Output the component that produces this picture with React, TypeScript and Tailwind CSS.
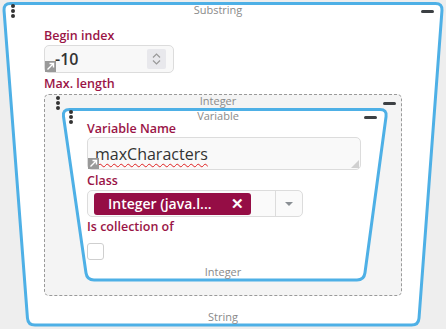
import React from "react";

type Pt = [number, number];

// rounded polygon path so the funnel corners look like the reference
function roundedPath(points: Pt[], r: number) {
    const n = points.length;
    let d = "";
    for (let i = 0; i < n; i++) {
        const prev = points[(i - 1 + n) % n];
        const cur = points[i];
        const next = points[(i + 1) % n];
        const v1 = [prev[0] - cur[0], prev[1] - cur[1]];
        const v2 = [next[0] - cur[0], next[1] - cur[1]];
        const l1 = Math.hypot(v1[0], v1[1]);
        const l2 = Math.hypot(v2[0], v2[1]);
        const a = [cur[0] + (v1[0] / l1) * r, cur[1] + (v1[1] / l1) * r];
        const b = [cur[0] + (v2[0] / l2) * r, cur[1] + (v2[1] / l2) * r];
        d += `${i === 0 ? "M" : "L"}${a[0]},${a[1]} Q${cur[0]},${cur[1]} ${b[0]},${b[1]} `;
    }
    return d + "Z";
}

const Funnel = ({ points, className }: { points: Pt[]; className: string }) => (
    <svg className={className} width="100%" height="100%">
        <path d={roundedPath(points, 7)} fill="#ffffff" stroke="#4eb0e6" strokeWidth={3} />
    </svg>
);

const Dots = ({ className }: { className: string }) => (
    <div className={`flex flex-col gap-[1.5px] ${className}`}>
        <span className="w-[3.5px] h-[3.5px] rounded-full bg-[#333]" />
        <span className="w-[3.5px] h-[3.5px] rounded-full bg-[#333]" />
        <span className="w-[3.5px] h-[3.5px] rounded-full bg-[#333]" />
    </div>
);

const Minus = ({ className }: { className: string }) => (
    <div className={`w-[13px] h-[2.5px] rounded-sm bg-[#3c4043] ${className}`} />
);

const ResizeCorner = () => (
    <div className="absolute left-0 bottom-0 w-[11px] h-[11px] bg-[#999] flex items-center justify-center">
        <svg width="9" height="9" viewBox="0 0 9 9">
            <path d="M1.5 7.5 L7.5 1.5 M3.5 1.5 H7.5 V5.5" stroke="#fff" strokeWidth="1.4" fill="none" />
        </svg>
    </div>
);

const Label = ({ children, className = "" }: { children: React.ReactNode; className?: string }) => (
    <div className={`text-[12.5px] leading-[14px] font-semibold text-[#9a1446] ${className}`}>{children}</div>
);

export default function App() {
    return (
        <div className="relative w-[446px] h-[329px] bg-[#eeeeee] overflow-hidden font-['Open_Sans',sans-serif]">
            <Funnel className="absolute inset-0" points={[[3.5, 3.5], [442.5, 3.5], [418.5, 325], [28, 325]]} />
            <Dots className="absolute left-[11px] top-[4px]" />
            <Minus className="absolute left-[421px] top-[10px]" />

            <div className="relative flex flex-col pl-[44px] pr-[44px]">
                <div className="mt-[3px] h-[14px] pr-[10px] text-center text-[11px] leading-[14px] text-[#8a8a8a]">Substring</div>

                <Label className="mt-[12px]">Begin index</Label>
                <div className="relative mt-[2px] w-[130px] h-[28px] rounded-[5px] border border-[#dcdcdc] bg-[#f8f8f8] flex items-center">
                    <span className="pl-[10px] text-[16px] font-semibold text-[#333]">-10</span>
                    <div className="ml-auto mr-[7px] w-[19px] h-[20px] rounded-[2px] bg-[#e8e8ec] flex flex-col items-center justify-center gap-[2px]">
                        <svg width="9" height="5" viewBox="0 0 9 5"><path d="M1 4.5 L4.5 1 L8 4.5" stroke="#999" strokeWidth="1.2" fill="none" /></svg>
                        <svg width="9" height="5" viewBox="0 0 9 5"><path d="M1 0.5 L4.5 4 L8 0.5" stroke="#999" strokeWidth="1.2" fill="none" /></svg>
                    </div>
                    <ResizeCorner />
                </div>

                <Label className="mt-[4px]">Max. length</Label>

                <div className="relative mt-[3px] h-[202px] rounded-[5px] border border-dashed border-[#9a9a9a] bg-[#f4f4f4]">
                    <Funnel className="absolute -left-[45px] -top-[95px] w-[446px] h-[329px]" points={[[62.5, 109.5], [387, 109.5], [364, 280], [87, 280]]} />
                    <Dots className="absolute left-[11px] top-[1px]" />
                    <Minus className="absolute left-[338px] top-[7px]" />
                    <Dots className="absolute left-[24px] top-[15px]" />
                    <Minus className="absolute left-[319px] top-[21px]" />

                    <div className="relative flex flex-col">
                        <div className="h-[12px] pr-[10px] text-center text-[11px] leading-[12px] text-[#8a8a8a]">Integer</div>
                        <div className="mt-[3px] h-[12px] pr-[10px] text-center text-[11px] leading-[12px] text-[#8a8a8a]">Variable</div>

                        <div className="pl-[42px] flex flex-col">
                            <Label>Variable Name</Label>
                            <div className="relative mt-[1px] w-[274px] h-[33px] rounded-[5px] border border-[#dcdcdc] bg-[#f9f9f9]">
                                <span className="absolute left-[7px] top-[4px] text-[16px] text-[#333] underline decoration-wavy decoration-[#e02020] decoration-1 underline-offset-[3px]">maxCharacters</span>
                                <div className="absolute right-[1px] bottom-[1px] w-0 h-0 border-l-[8px] border-l-transparent border-b-[8px] border-b-[#d0d0d0]" />
                                <ResizeCorner />
                            </div>

                            <Label className="mt-[4px]">Class</Label>
                            <div className="mt-[2px] w-[216px] h-[27px] rounded-[5px] border border-[#dcdcdc] bg-[#fafafa] flex items-center">
                                <div className="ml-[6px] w-[157px] h-[22px] rounded-[3px] bg-[#950d45] flex items-center text-white text-[14px] font-semibold">
                                    <span className="ml-[14px]">Integer (java.l...</span>
                                    <span className="ml-auto mr-[7px] text-[15px] leading-none">✕</span>
                                </div>
                                <div className="ml-auto w-px h-full bg-[#dcdcdc]" />
                                <div className="w-[26px] flex justify-center">
                                    <svg width="10" height="6" viewBox="0 0 10 6"><path d="M1 1 H9 L5 5 Z" fill="#8a8f94" /></svg>
                                </div>
                            </div>

                            <Label className="mt-[3px]">Is collection of</Label>
                            <div className="mt-[9px] w-[17px] h-[17px] rounded-[3px] border border-[#cfcfcf] bg-white" />
                        </div>

                        <div className="mt-[6px] h-[12px] text-center text-[11px] leading-[12px] text-[#8a8a8a]">Integer</div>
                    </div>
                </div>

                <div className="mt-[14px] h-[14px] text-center text-[11px] leading-[14px] text-[#8a8a8a]">String</div>
            </div>
        </div>
    );
}
